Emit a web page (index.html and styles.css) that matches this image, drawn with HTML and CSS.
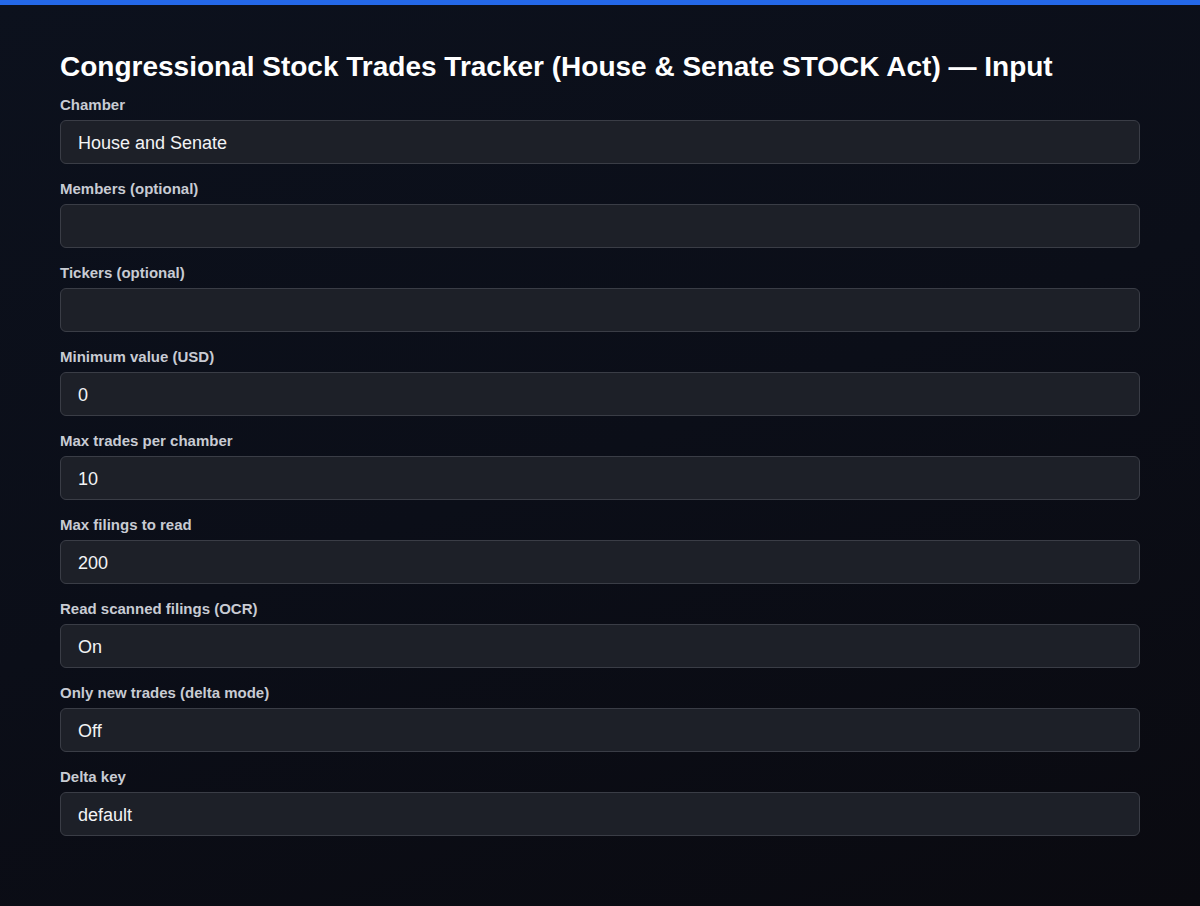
FILE: index.html
```html
<!DOCTYPE html>
<html lang="en">
<head>
  <meta charset="UTF-8">
  <meta name="viewport" content="width=device-width, initial-scale=1.0">
  <title>Congressional Stock Trades Tracker — Input</title>
  <link rel="stylesheet" href="styles.css">
</head>
<body>
  <div class="topbar"></div>
  <div class="container">
    <h1>Congressional Stock Trades Tracker (House &amp; Senate STOCK Act) — Input</h1>
    <div class="form">
      <div class="field">
        <label>Chamber</label>
        <div class="input">House and Senate</div>
      </div>
      <div class="field">
        <label>Members (optional)</label>
        <div class="input"></div>
      </div>
      <div class="field">
        <label>Tickers (optional)</label>
        <div class="input"></div>
      </div>
      <div class="field">
        <label>Minimum value (USD)</label>
        <div class="input">0</div>
      </div>
      <div class="field">
        <label>Max trades per chamber</label>
        <div class="input">10</div>
      </div>
      <div class="field">
        <label>Max filings to read</label>
        <div class="input">200</div>
      </div>
      <div class="field">
        <label>Read scanned filings (OCR)</label>
        <div class="input">On</div>
      </div>
      <div class="field">
        <label>Only new trades (delta mode)</label>
        <div class="input">Off</div>
      </div>
      <div class="field">
        <label>Delta key</label>
        <div class="input">default</div>
      </div>
    </div>
  </div>
</body>
</html>
```

FILE: styles.css
```css
html, body {
  height: 100%;
}

body {
  margin: 0;
  font-family: "Liberation Sans", Arial, sans-serif;
  color: #ffffff;
  background: linear-gradient(160deg, #0c111d 0%, #0b0e18 50%, #0a0a10 100%);
  overflow: hidden;
}

.topbar {
  height: 5px;
  background-color: #2468e8;
}

.container {
  padding: 45px 60px 0 60px;
}

h1 {
  margin: 0 0 12px 0;
  font-size: 28px;
  line-height: 34px;
  font-weight: bold;
  color: #ffffff;
}

.form {
  display: flex;
  flex-direction: column;
  gap: 16px;
}

.field {
  display: flex;
  flex-direction: column;
  gap: 6px;
}

.field label {
  font-size: 15px;
  line-height: 18px;
  font-weight: bold;
  color: #c8cbd3;
}

.input {
  height: 41px;
  box-sizing: content-box;
  border: 1px solid #3a3d46;
  border-radius: 6px;
  background-color: #1d2028;
  padding: 1px 16px 0 17px;
  font-size: 18px;
  line-height: 42px;
  color: #f2f3f5;
}
```
